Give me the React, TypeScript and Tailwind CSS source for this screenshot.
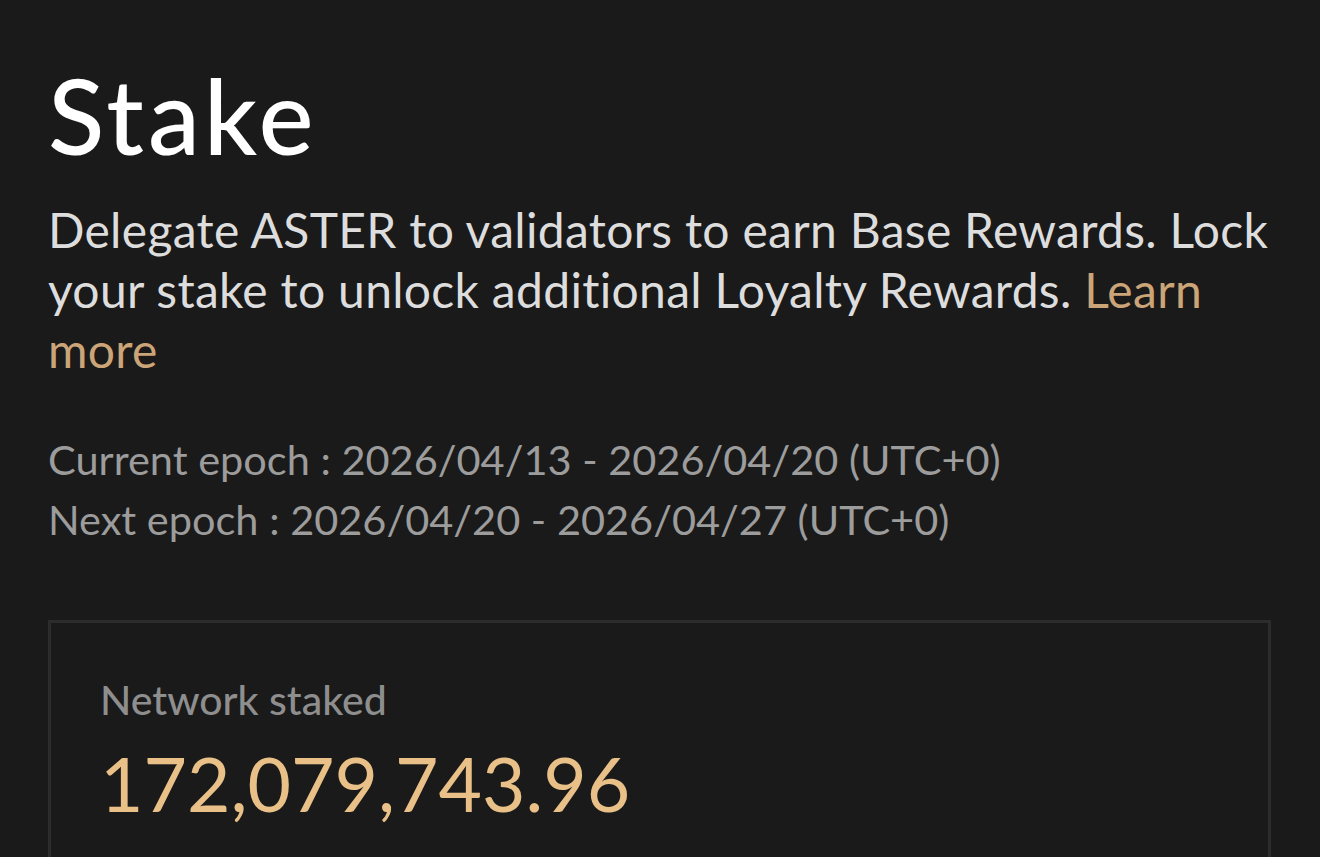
export default function App() {
  return (
    <div className="min-h-screen w-full bg-[#1a1a1a] font-['Lato','Noto_Sans',sans-serif] overflow-hidden [font-variant-ligatures:none]">
      <div className="flex flex-col pl-[48px] pr-[49px] pt-[60px]">
        <h1 className="text-[104px] leading-[110px] font-medium text-white tracking-[4px]">Stake</h1>
        <p className="mt-[30px] text-[48px] leading-[60px] tracking-[0.3px] text-[#dddddd]">
          Delegate ASTER to validators to earn Base Rewards. Lock your stake to unlock additional Loyalty Rewards.{" "}
          <span className="text-[#cba477]">Learn more</span>
        </p>
        <div className="mt-[49px] flex flex-col text-[41.5px] leading-[60px] text-[#9c9c9c]">
          <p>Current epoch : 2026/04/13 - 2026/04/20 (UTC+0)</p>
          <p>Next epoch : 2026/04/20 - 2026/04/27 (UTC+0)</p>
        </div>
        <div className="mt-[71px] border-[3px] border-[#2c2c2c] border-b-0 pl-[49px] pr-[50px] pt-[52px] pb-[40px]">
          <p className="text-[41px] leading-[50px] font-medium text-[#8e8e8e]">Network staked</p>
          <p className="mt-[18px] text-[75px] leading-[80px] text-[#e9c087]">172,079,743.96</p>
        </div>
      </div>
    </div>
  );
}
